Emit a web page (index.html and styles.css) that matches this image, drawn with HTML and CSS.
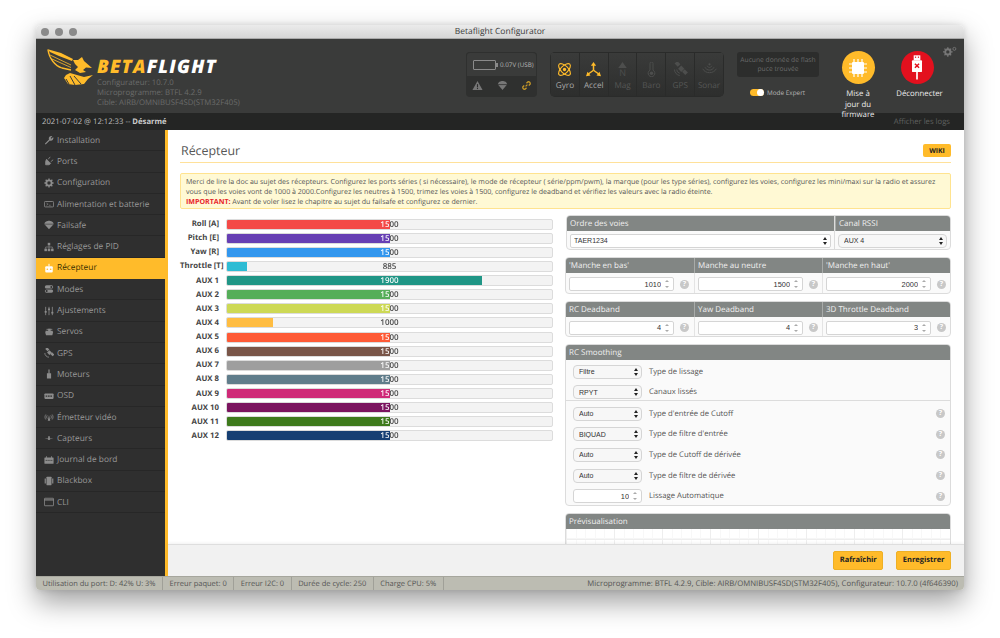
FILE: index.html
```html
<!DOCTYPE html>
<html lang="fr">
<head>
<meta charset="utf-8">
<title>Betaflight Configurator</title>
<link rel="stylesheet" href="styles.css">
</head>
<body>
<div class="window">
  <div class="titlebar">
    <div class="dots"><i></i><i></i><i></i></div>
    <span>Betaflight Configurator</span>
  </div>
  <header class="header">
    <div class="brand">
      <svg class="wasp" viewBox="0 0 46 37" width="46" height="37">
        <path d="M0 1 L14 5 L26 11 L25 13 L12 8 L3 4 Z" fill="#ffbb2a"/>
        <path d="M1 2 C2 10 8 18 15 20 L24 22" fill="none" stroke="#ffbb2a" stroke-width="1.300"/>
        <path d="M3 7 L24 17 M5 11 L24 19.500" stroke="#ffbb2a" stroke-width=".8" fill="none"/>
        <path d="M26 12 L31 12 L35 9 L37 13 L45 20 L39 19.500 L36 22 L39 24 L33 25 L28 22 L31 19 L28 16 Z" fill="#ffbb2a"/>
        <path d="M23 25 L30 27 L37 29 L46 27 L41 31 L37 36 L28 37 L21 36 L17 30 L19 27 Z" fill="#ffbb2a"/>
        <path d="M23 28 L28 37 M27 28 L34 36 M19 31 L22 36" stroke="#3a3b3a" stroke-width="1" fill="none"/>
      </svg>
      <div class="brand-text">
        <div class="logotype"><span class="beta">BETA</span>FLIGHT</div>
        <div class="version">Configurateur: 10.7.0</div>
        <div class="version">Microprogramme: BTFL 4.2.9</div>
        <div class="version">Cible: AIRB/OMNIBUSF4SD(STM32F405)</div>
      </div>
    </div>
    <div class="power">
      <div class="battery-row">
        <span class="battery"></span>
        <span>0.07V (USB)</span>
      </div>
      <div class="status-icons">
        <svg viewBox="0 0 12 12" width="11" height="11"><path d="M6 1 L11.500 11 H.5 Z" fill="#777"/><rect x="5.400" y="4.500" width="1.200" height="3.500" fill="#2c2c2c"/><rect x="5.400" y="8.700" width="1.200" height="1.200" fill="#2c2c2c"/></svg>
        <svg viewBox="0 0 12 12" width="11" height="11"><path d="M1 5 C1 2 4 1 6 1 C8 1 11 2 11 5 L6 11 Z" fill="#777"/><path d="M1 5 H11" stroke="#2c2c2c" stroke-width=".8"/></svg>
        <svg viewBox="0 0 12 12" width="11" height="11"><path d="M5 7 L7 5 M3.500 6 L2 7.500 A2 2 0 0 0 4.500 10 L6 8.500 M6 3.500 L7.500 2 A2 2 0 0 1 10 4.500 L8.500 6" fill="none" stroke="#c99a28" stroke-width="1.400"/></svg>
      </div>
    </div>
    <div class="sensors">
      <div class="sensor on">
        <svg viewBox="0 0 20 20"><g fill="none" stroke="#ffbb2a" stroke-width="1.500"><ellipse cx="10" cy="10" rx="10" ry="4.800" transform="rotate(45 10 10)"/><ellipse cx="10" cy="10" rx="10" ry="4.800" transform="rotate(-45 10 10)"/></g><circle cx="10" cy="10" r="2.200" fill="#ffbb2a"/></svg>
        <span>Gyro</span>
      </div>
      <div class="sensor on">
        <svg viewBox="0 0 20 20"><g stroke="#ffbb2a" stroke-width="2" fill="none"><path d="M10 11 V3"/><path d="M10 11 L3 16"/><path d="M10 11 L17 16"/></g><g fill="#ffbb2a"><path d="M10 0 L13.500 5 H6.500 Z"/><path d="M0 19 L2 13 L6 18 Z"/><path d="M20 19 L18 13 L14 18 Z"/></g></svg>
        <span>Accel</span>
      </div>
      <div class="sensor">
        <div class="mag"><svg viewBox="0 0 10 7" width="9" height="6"><path d="M5 0 L10 7 H0 Z" fill="#4d4e4d"/></svg><b>N</b></div>
        <span>Mag</span>
      </div>
      <div class="sensor">
        <svg viewBox="0 0 20 20"><path d="M8 2 a2 2 0 0 1 4 0 V11 a4.500 4.500 0 1 1 -4 0 Z" fill="none" stroke="#4d4e4d" stroke-width="1.300"/><circle cx="10" cy="15" r="2.300" fill="#4d4e4d"/></svg>
        <span>Baro</span>
      </div>
      <div class="sensor">
        <svg viewBox="0 0 20 20"><g fill="#4d4e4d"><rect x="8" y="6" width="6" height="6" transform="rotate(45 11 9)"/><rect x="3" y="0" width="6" height="5" transform="rotate(45 6 2.500)"/><rect x="13" y="11" width="6" height="5" transform="rotate(45 16 13.500)"/></g><path d="M2 10 a8 8 0 0 0 7 8 M5 10 a5 5 0 0 0 4 5" fill="none" stroke="#4d4e4d" stroke-width="1.300"/></svg>
        <span>GPS</span>
      </div>
      <div class="sensor">
        <svg viewBox="0 0 20 20"><g fill="none" stroke="#4d4e4d" stroke-width="1.300"><path d="M1 9 C4 16 16 16 19 9"/><path d="M4 7 C6 12 14 12 16 7"/><path d="M7 5 C8 8 12 8 13 5"/></g><circle cx="10" cy="3" r="1.500" fill="#4d4e4d"/></svg>
        <span>Sonar</span>
      </div>
    </div>
    <div class="side-info">
      <div class="flash">Aucune donnée de flash<br>puce trouvée</div>
      <div class="expert"><span class="toggle"></span><span>Mode Expert</span></div>
    </div>
    <div class="action action-update">
      <div class="round update">
        <svg viewBox="0 0 24 24" width="24" height="24"><path d="M8 3 V21 M12 3 V21 M16 3 V21 M3 8 H21 M3 12 H21 M3 16 H21" stroke="#fff" stroke-width="1.200"/><rect x="6" y="6" width="12" height="12" rx="1" fill="#fff"/></svg>
      </div>
      <span>Mise à<br>jour du<br>firmware</span>
    </div>
    <div class="action action-disconnect">
      <div class="round disconnect">
        <svg viewBox="0 0 24 30" width="20" height="26"><rect x="8" y="1" width="8" height="6" fill="#fff"/><rect x="9.500" y="2.500" width="1.500" height="1.500" fill="#e3101e"/><rect x="13" y="2.500" width="1.500" height="1.500" fill="#e3101e"/><rect x="6" y="7" width="12" height="14" rx="1" fill="#fff"/><path d="M12 21 V30" stroke="#fff" stroke-width="2"/><path d="M9.500 11 L14.500 16 M14.500 11 L9.500 16" stroke="#e3101e" stroke-width="1.800"/></svg>
      </div>
      <span>Déconnecter</span>
    </div>
    <svg class="gear" viewBox="0 0 16 12" width="14" height="11">
      <circle cx="5.500" cy="6.500" r="3" fill="none" stroke="#777" stroke-width="2.200"/>
      <path d="M5.500 1 V3 M5.500 10 V12 M0 6.500 H2 M9 6.500 H11 M1.700 2.700 L3 4 M8 9 L9.300 10.300 M1.700 10.300 L3 9 M8 4 L9.300 2.700" stroke="#777" stroke-width="1.500"/>
      <circle cx="13" cy="3" r="1.700" fill="none" stroke="#777" stroke-width="1"/>
    </svg>
  </header>
  <div class="logbar">
    <span>2021-07-02 @ 12:12:33 -- <b>Désarmé</b></span>
    <span class="showlogs">Afficher les logs</span>
  </div>
  <div class="main">
    <nav class="nav">
      <svg width="0" height="0" class="defs">
        <defs>
          <symbol id="i-wrench" viewBox="0 0 12 12"><path d="M1 10.500 L6 5.500 A3 3 0 0 1 10 1.500 L8 3.500 L9 4.500 L11 2.500 A3 3 0 0 1 7 6.500 L2 11.500 Z" fill="currentColor"/></symbol>
          <symbol id="i-plug" viewBox="0 0 12 12"><path d="M3 4 L8 9 L6 10.500 L2 10.500 L2 6.500 Z M5 4 L7.500 1 M8 7 L11 4.500" fill="currentColor" stroke="currentColor"/></symbol>
          <symbol id="i-gear" viewBox="0 0 12 12"><circle cx="6" cy="6" r="3.200" fill="none" stroke="currentColor" stroke-width="2.200"/><path d="M6 .5 V2.500 M6 9.500 V11.500 M.5 6 H2.500 M9.500 6 H11.500 M2 2 L3.500 3.500 M8.500 8.500 L10 10 M2 10 L3.500 8.500 M8.500 3.500 L10 2" stroke="currentColor" stroke-width="1.600"/></symbol>
          <symbol id="i-batt" viewBox="0 0 12 12"><rect x=".5" y="3" width="11" height="6.500" rx="1" fill="none" stroke="currentColor"/><path d="M3 5 L5 6.200 L3 7.500 M6 7.500 H8" fill="none" stroke="currentColor" stroke-width=".7"/></symbol>
          <symbol id="i-chute" viewBox="0 0 12 12"><path d="M.5 5 C.5 2 4 1 6 1 C8 1 11.500 2 11.500 5 L6 11 Z" fill="currentColor"/><path d="M.5 5 H11.500" stroke="#2f2f2f" stroke-width=".7"/></symbol>
          <symbol id="i-tree" viewBox="0 0 12 12"><g fill="currentColor"><rect x="4.500" y="1" width="3" height="3"/><rect x="0.500" y="8" width="3" height="3"/><rect x="4.500" y="8" width="3" height="3"/><rect x="8.500" y="8" width="3" height="3"/></g><path d="M6 4 V8 M2 8 V6 H10 V8" fill="none" stroke="currentColor" stroke-width=".8"/></symbol>
          <symbol id="i-radio" viewBox="0 0 12 12"><rect x="1.500" y="4" width="9" height="7.500" rx="1.200" fill="currentColor"/><path d="M6 4 V1" stroke="currentColor" stroke-width="1.200"/><circle cx="4" cy="7.500" r="1" fill="var(--hole)"/><circle cx="8" cy="7.500" r="1" fill="var(--hole)"/></symbol>
          <symbol id="i-modes" viewBox="0 0 12 12"><rect x="1" y="1.500" width="10" height="4" rx="2" fill="currentColor"/><rect x="1" y="6.500" width="10" height="4" rx="2" fill="currentColor"/><circle cx="8.800" cy="3.500" r="1.200" fill="#2f2f2f"/><circle cx="3.200" cy="8.500" r="1.200" fill="#2f2f2f"/></symbol>
          <symbol id="i-sliders" viewBox="0 0 12 12"><path d="M2 1 V11 M6 1 V11 M10 1 V11" stroke="currentColor"/><rect x=".8" y="6" width="2.400" height="2" fill="currentColor"/><rect x="4.800" y="3" width="2.400" height="2" fill="currentColor"/><rect x="8.800" y="7" width="2.400" height="2" fill="currentColor"/></symbol>
          <symbol id="i-servo" viewBox="0 0 12 12"><path d="M2 4.500 H10 L11 6 L10 10 H2.500 L1.500 7 Z M5 2 H8 V4.500 H5 Z" fill="currentColor"/><path d="M3 2.800 H10" stroke="currentColor"/></symbol>
          <symbol id="i-sat" viewBox="0 0 12 12"><g fill="currentColor"><rect x="4.500" y="3.500" width="4" height="4" transform="rotate(45 6.500 5.500)"/><rect x="2" y="0" width="4" height="3" transform="rotate(45 4 1.500)"/><rect x="8" y="6" width="4" height="3" transform="rotate(45 10 7.500)"/></g><path d="M1 6 a5 5 0 0 0 5 5" fill="none" stroke="currentColor"/></symbol>
          <symbol id="i-motor" viewBox="0 0 12 12"><path d="M3.500 5 H8.500 V11.500 H3.500 Z M5.300 .5 H6.700 V5 H5.300 Z" fill="currentColor"/></symbol>
          <symbol id="i-osd" viewBox="0 0 12 12"><rect x=".5" y="3" width="11" height="6.500" rx="1" fill="currentColor"/><path d="M2 6.200 H10" stroke="#2f2f2f" stroke-width="1.400" stroke-dasharray="2 .8"/></symbol>
          <symbol id="i-vtx" viewBox="0 0 12 12"><g fill="none" stroke="currentColor" stroke-width=".9"><path d="M2.200 3 C.8 5 .8 7 2.200 9"/><path d="M3.800 4 C3 5.300 3 6.700 3.800 8"/><path d="M9.800 3 C11.200 5 11.200 7 9.800 9"/><path d="M8.200 4 C9 5.300 9 6.700 8.200 8"/></g><path d="M6 3.500 L7.500 10.500 H4.500 Z" fill="currentColor"/></symbol>
          <symbol id="i-sensor" viewBox="0 0 12 12"><path d="M.5 6.500 H11.500 L7 7.500 H5 Z M5 4 L7 4 L7 8.500 H5 Z" fill="currentColor"/></symbol>
          <symbol id="i-log" viewBox="0 0 12 12"><rect x=".5" y="3" width="11" height="7.500" rx=".6" fill="currentColor"/><path d="M3 1.500 V3.500 M9 1.500 V3.500" stroke="currentColor"/><path d="M2 6.500 H10" stroke="#2f2f2f" stroke-width=".9" stroke-dasharray="1.500 .7"/></symbol>
          <symbol id="i-box" viewBox="0 0 12 12"><rect x="3" y="1" width="6" height="10" rx=".5" fill="currentColor"/><rect x=".8" y="3" width="1.400" height="6" fill="currentColor"/><rect x="9.800" y="3" width="1.400" height="6" fill="currentColor"/></symbol>
          <symbol id="i-cli" viewBox="0 0 12 12"><rect x=".5" y="1.500" width="11" height="9" rx=".6" fill="none" stroke="currentColor"/><path d="M.5 3.500 H11.500" stroke="currentColor" stroke-width="1.400"/></symbol>
        </defs>
      </svg>
      <a><svg><use href="#i-wrench"/></svg>Installation</a>
      <a><svg><use href="#i-plug"/></svg>Ports</a>
      <a><svg><use href="#i-gear"/></svg>Configuration</a>
      <a><svg><use href="#i-batt"/></svg>Alimentation et batterie</a>
      <a><svg><use href="#i-chute"/></svg>Failsafe</a>
      <a><svg><use href="#i-tree"/></svg>Réglages de PID</a>
      <a class="active"><svg><use href="#i-radio"/></svg>Récepteur</a>
      <a><svg><use href="#i-modes"/></svg>Modes</a>
      <a><svg><use href="#i-sliders"/></svg>Ajustements</a>
      <a><svg><use href="#i-servo"/></svg>Servos</a>
      <a><svg><use href="#i-sat"/></svg>GPS</a>
      <a><svg><use href="#i-motor"/></svg>Moteurs</a>
      <a><svg><use href="#i-osd"/></svg>OSD</a>
      <a><svg><use href="#i-vtx"/></svg>Émetteur vidéo</a>
      <a><svg><use href="#i-sensor"/></svg>Capteurs</a>
      <a><svg><use href="#i-log"/></svg>Journal de bord</a>
      <a><svg><use href="#i-box"/></svg>Blackbox</a>
      <a><svg><use href="#i-cli"/></svg>CLI</a>
    </nav>
    <div class="content">
      <div class="scroll">
        <div class="title-row">
          <h1>Récepteur</h1>
          <a class="wiki">WIKI</a>
        </div>
        <div class="note">
          Merci de lire la doc au sujet des récepteurs. Configurez les ports séries ( si nécessaire), le mode de récepteur ( série/ppm/pwm), la marque (pour les type séries), configurez les voies, configurez les mini/maxi sur la radio et assurez vous que les voies vont de 1000 à 2000.Configurez les neutres à 1500, trimez les voies à 1500, configurez le deadband et vérifiez les valeurs avec la radio éteinte.<br>
          <b>IMPORTANT:</b> Avant de voler lisez le chapitre au sujet du failsafe et configurez ce dernier.
        </div>
        <div class="columns">
          <div class="bars">
            <div class="bar-row"><label>Roll [A]</label><div class="bar" style="--p:50%;--c:#f44a47"><div class="fill"></div><div class="val">1500</div></div></div>
            <div class="bar-row"><label>Pitch [E]</label><div class="bar" style="--p:50%;--c:#673fb4"><div class="fill"></div><div class="val">1500</div></div></div>
            <div class="bar-row"><label>Yaw [R]</label><div class="bar" style="--p:50%;--c:#3397ee"><div class="fill"></div><div class="val">1500</div></div></div>
            <div class="bar-row"><label class="long">Throttle [T]</label><div class="bar" style="--p:6.200%;--c:#2dbcd4"><div class="fill"></div><div class="val">885</div></div></div>
            <div class="bar-row"><label>AUX 1</label><div class="bar" style="--p:78.600%;--c:#209686"><div class="fill"></div><div class="val">1900</div></div></div>
            <div class="bar-row"><label>AUX 2</label><div class="bar" style="--p:50%;--c:#55ae59"><div class="fill"></div><div class="val">1500</div></div></div>
            <div class="bar-row"><label>AUX 3</label><div class="bar" style="--p:50%;--c:#cdd955"><div class="fill"></div><div class="val">1500</div></div></div>
            <div class="bar-row"><label>AUX 4</label><div class="bar" style="--p:14.100%;--c:#ffbd42"><div class="fill"></div><div class="val">1000</div></div></div>
            <div class="bar-row"><label>AUX 5</label><div class="bar" style="--p:50%;--c:#fe5a36"><div class="fill"></div><div class="val">1500</div></div></div>
            <div class="bar-row"><label>AUX 6</label><div class="bar" style="--p:50%;--c:#795548"><div class="fill"></div><div class="val">1500</div></div></div>
            <div class="bar-row"><label>AUX 7</label><div class="bar" style="--p:50%;--c:#9e9e9e"><div class="fill"></div><div class="val">1500</div></div></div>
            <div class="bar-row"><label>AUX 8</label><div class="bar" style="--p:50%;--c:#607d8b"><div class="fill"></div><div class="val">1500</div></div></div>
            <div class="bar-row"><label>AUX 9</label><div class="bar" style="--p:50%;--c:#cf2a78"><div class="fill"></div><div class="val">1500</div></div></div>
            <div class="bar-row"><label>AUX 10</label><div class="bar" style="--p:50%;--c:#7b145f"><div class="fill"></div><div class="val">1500</div></div></div>
            <div class="bar-row"><label>AUX 11</label><div class="bar" style="--p:50%;--c:#3e7a1c"><div class="fill"></div><div class="val">1500</div></div></div>
            <div class="bar-row"><label>AUX 12</label><div class="bar" style="--p:50%;--c:#173f73"><div class="fill"></div><div class="val">1500</div></div></div>
          </div>
          <div class="panels">
            <div class="panel channel-panel">
              <div class="cell cell-wide">
                <div class="cell-head">Ordre des voies</div>
                <div class="cell-body"><div class="select-wrap"><select><option>TAER1234</option></select></div></div>
              </div>
              <div class="cell cell-rssi">
                <div class="cell-head">Canal RSSI</div>
                <div class="cell-body"><div class="select-wrap rounded"><select><option>AUX 4</option></select></div></div>
              </div>
            </div>
            <div class="panel">
              <div class="cell"><div class="cell-head">'Manche en bas'</div><div class="cell-body num"><div class="num-wrap"><input value="1010"><i class="spin"></i></div><span class="help">?</span></div></div>
              <div class="cell"><div class="cell-head">Manche au neutre</div><div class="cell-body num"><div class="num-wrap"><input value="1500"><i class="spin"></i></div><span class="help">?</span></div></div>
              <div class="cell"><div class="cell-head">'Manche en haut'</div><div class="cell-body num"><div class="num-wrap"><input value="2000"><i class="spin"></i></div><span class="help">?</span></div></div>
            </div>
            <div class="panel">
              <div class="cell"><div class="cell-head">RC Deadband</div><div class="cell-body num"><div class="num-wrap"><input value="4"><i class="spin"></i></div><span class="help">?</span></div></div>
              <div class="cell"><div class="cell-head">Yaw Deadband</div><div class="cell-body num"><div class="num-wrap"><input value="4"><i class="spin"></i></div><span class="help">?</span></div></div>
              <div class="cell"><div class="cell-head">3D Throttle Deadband</div><div class="cell-body num"><div class="num-wrap"><input value="3"><i class="spin"></i></div><span class="help">?</span></div></div>
            </div>
            <div class="panel stack">
              <div class="cell-head">RC Smoothing</div>
              <div class="smooth top">
                <div class="smooth-row"><div class="select-wrap rounded"><select><option>Filtre</option></select></div><span>Type de lissage</span></div>
                <div class="smooth-row"><div class="select-wrap rounded"><select><option>RPYT</option></select></div><span>Canaux lissés</span></div>
              </div>
              <div class="smooth rest">
                <div class="smooth-row"><div class="select-wrap rounded"><select><option>Auto</option></select></div><span>Type d'entrée de Cutoff</span><span class="help">?</span></div>
                <div class="smooth-row"><div class="select-wrap rounded"><select><option>BIQUAD</option></select></div><span>Type de filtre d'entrée</span><span class="help">?</span></div>
                <div class="smooth-row"><div class="select-wrap rounded"><select><option>Auto</option></select></div><span>Type de Cutoff de dérivée</span><span class="help">?</span></div>
                <div class="smooth-row"><div class="select-wrap rounded"><select><option>Auto</option></select></div><span>Type de filtre de dérivée</span><span class="help">?</span></div>
                <div class="smooth-row"><div class="num-wrap"><input value="10"><i class="spin"></i></div><span>Lissage Automatique</span><span class="help">?</span></div>
              </div>
            </div>
            <div class="panel stack">
              <div class="cell-head">Prévisualisation</div>
              <div class="preview"></div>
            </div>
          </div>
        </div>
      </div>
      <div class="footer">
        <a class="btn">Rafraîchir</a>
        <a class="btn">Enregistrer</a>
      </div>
    </div>
  </div>
  <footer class="statusbar">
    <span>Utilisation du port: D: 42% U: 3%</span>
    <span>Erreur paquet: 0</span>
    <span>Erreur I2C: 0</span>
    <span>Durée de cycle: 250</span>
    <span>Charge CPU: 5%</span>
    <span class="fw">Microprogramme: BTFL 4.2.9, Cible: AIRB/OMNIBUSF4SD(STM32F405), Configurateur: 10.7.0 (4f646390)</span>
  </footer>
</div>
</body>
</html>
```
FILE: styles.css
```css
* { box-sizing: border-box; }
html, body { height: 100%; }
body {
  margin: 0;
  padding: 25px 36px 0;
  background: #fff;
  font-family: "Open Sans", "Liberation Sans", sans-serif;
  font-size: 8.5px;
  color: #444;
  overflow: hidden;
  text-rendering: geometricPrecision;
}
.window {
  height: 565px;
  display: flex;
  flex-direction: column;
  border-radius: 5px 5px 4px 4px;
  box-shadow: 0 12px 28px rgba(0,0,0,.38), 0 0 6px rgba(0,0,0,.12);
  overflow: hidden;
}
.titlebar {
  height: 14px;
  flex: none;
  display: flex;
  align-items: center;
  justify-content: center;
  position: relative;
  background: linear-gradient(#ebebeb, #d6d6d6);
  border-bottom: 1px solid #aaa;
  font-size: 8.5px;
  color: #3c3c3c;
}
.dots { position: absolute; left: 5px; top: 3px; display: flex; gap: 6px; }
.dots i { width: 8px; height: 8px; border-radius: 50%; background: #8a8a8a; }

.header {
  height: 74px;
  flex: none;
  position: relative;
  z-index: 1;
  display: flex;
  background: #3a3b3a;
  color: #ddd;
}
.brand { display: flex; width: 430px; padding: 9px 0 0 11px; }
.wasp { flex: none; }
.brand-text { margin: 12px 0 0 4px; }
.logotype {
  font: italic 800 18.500px/14px "Open Sans", sans-serif;
  color: #fff;
  margin-bottom: 4px;
  letter-spacing: 1.200px;
}
.beta { color: #ffbb2a; }
.version { font-size: 7.800px; line-height: 10.200px; color: #6a6b6a; white-space: nowrap; }

.power {
  width: 71px;
  height: 45px;
  margin-top: 13px;
  border-radius: 4px;
  background: #2f302f;
  overflow: hidden;
  font-size: 6.300px;
  color: #b5b5b5;
}
.battery-row {
  height: 24px;
  display: flex;
  align-items: center;
  gap: 4px;
  padding-left: 6px;
  background: #3a3b3a;
  border: 1px solid #2f302f;
  border-bottom: none;
  border-radius: 4px 4px 0 0;
  white-space: nowrap;
}
.battery {
  width: 23px;
  height: 10px;
  border: 1px solid #8a8a8a;
  border-radius: 1px;
  flex: none;
  position: relative;
}
.battery::after {
  content: "";
  position: absolute;
  right: -3px;
  top: 2px;
  width: 2px;
  height: 4px;
  background: #8a8a8a;
}
.status-icons { display: flex; justify-content: space-between; align-items: center; height: 19px; padding: 0 5px 0 6px; }

.sensors {
  width: 174px;
  height: 45px;
  margin: 13px 0 0 13px;
  display: flex;
  gap: 1px;
  background: #2a2b2a;
  border-radius: 5px;
  overflow: hidden;
  padding: 1px;
}
.sensor {
  flex: 1;
  display: flex;
  flex-direction: column;
  align-items: center;
  padding-top: 9px;
  background: linear-gradient(#3a3b3a, #2d2e2d);
  font-size: 8.200px;
  color: #565756;
}
.sensor svg { flex: none; width: 15px; height: 15px; }
.sensor span { margin-top: 3px; }
.sensor.on span { color: #a8a8a8; }
.mag { height: 15px; display: flex; flex-direction: column; align-items: center; }
.sensor .mag svg { display: block; width: 9px; height: 6px; }
.mag b { font-weight: 400; font-size: 9px; line-height: 9px; color: #4d4e4d; }

.side-info { width: 82px; margin: 13px 0 0 13px; }
.flash {
  height: 25px;
  background: #2c2d2c;
  border-radius: 3px;
  padding-top: 4px;
  text-align: center;
  color: #6b6c6b;
  font-size: 6.700px;
  line-height: 8.500px;
  white-space: nowrap;
}
.expert {
  display: flex;
  align-items: center;
  gap: 3px;
  margin: 11px 0 0 13px;
  font-size: 6.400px;
  color: #b8b8b8;
  white-space: nowrap;
}
.toggle {
  width: 14px;
  height: 7px;
  background: #ffbb2a;
  border-radius: 4px;
  position: relative;
  flex: none;
}
.toggle::after {
  content: "";
  position: absolute;
  right: 0;
  top: 0;
  width: 7px;
  height: 7px;
  border-radius: 50%;
  background: #fff;
}

.action {
  display: flex;
  flex-direction: column;
  align-items: center;
  margin-top: 12px;
  font-size: 7.800px;
  line-height: 10.500px;
  color: #eee;
  text-align: center;
  white-space: nowrap;
}
.action-update { width: 50px; margin-left: 14px; }
.action-disconnect { width: 50px; margin-left: 9px; }
.action span { margin-top: 5px; }
.action-disconnect span { margin-left: 5px; }
.round {
  width: 33px;
  height: 33px;
  border-radius: 50%;
  flex: none;
  display: flex;
  align-items: center;
  justify-content: center;
}
.update { background: #ffbb2a; }
.disconnect { background: #e3101e; overflow: hidden; align-items: flex-start; padding-top: 3px; }
.gear { position: absolute; right: 7px; top: 7px; }

.logbar {
  height: 17px;
  flex: none;
  display: flex;
  justify-content: space-between;
  align-items: center;
  padding: 0 14px 0 6px;
  background: #242524;
  color: #bdbdbd;
  font-size: 7.700px;
}
.logbar b { font-weight: 700; color: #ccc; }
.showlogs { color: #5f605f; }

.main { flex: 1; display: flex; min-height: 0; }
.nav {
  width: 132px;
  flex: none;
  background: #2f2f2f;
  border-right: 3px solid #ffbb2a;
}
.defs { position: absolute; }
.nav a {
  height: 21.300px;
  display: flex;
  align-items: center;
  gap: 3px;
  padding-left: 8px;
  color: #989898;
  font-size: 8.350px;
  border-bottom: 1px solid #272727;
  white-space: nowrap;
  --hole: #ffbb2a;
}
.nav svg:not(.defs) { width: 10px; height: 10px; flex: none; color: #8c8c8c; }
.nav a.active { background: #ffbb2a; color: #3a3000; border-bottom-color: #ffbb2a; }
.nav a.active svg { color: #fff; }

.content {
  flex: 1;
  min-width: 0;
  display: flex;
  flex-direction: column;
  background: #fff;
}
.scroll { flex: 1; min-height: 0; overflow: hidden; padding: 13px 13px 0 12px; }
.title-row {
  height: 20px;
  display: flex;
  justify-content: space-between;
  border-bottom: 1px solid #ffe19a;
}
h1 {
  margin: 0 0 0 1px;
  font-size: 12.400px;
  line-height: 15px;
  font-weight: 400;
  color: #555;
}
.wiki {
  width: 28px;
  height: 13px;
  margin-top: 1px;
  background: #ffbb2a;
  border-radius: 2px;
  text-align: center;
  font-size: 6.800px;
  font-weight: 700;
  line-height: 13px;
  color: #222;
}
.note {
  height: 36px;
  margin-top: 10px;
  padding: 3px 5px 0;
  background: #fff9d4;
  border: 1px solid #ffe38f;
  border-radius: 2px;
  font-size: 7.070px;
  line-height: 10px;
  color: #555;
}
.note b { color: #e8222a; }

.columns { display: flex; margin-top: 6px; }
.bars { width: 373px; flex: none; padding-top: 2px; }
.bar-row { height: 14.130px; display: flex; align-items: center; }
.bar-row label {
  width: 39px;
  margin-right: 7px;
  flex: none;
  text-align: right;
  font-weight: 700;
  font-size: 7.800px;
  color: #444;
  white-space: nowrap;
  display: flex;
  justify-content: flex-end;
}
.bar-row label.long { justify-content: flex-start; }
.bar {
  width: 327px;
  height: 11px;
  position: relative;
  background: #f3f3f3;
  border: 1px solid #dcdcdc;
  border-radius: 2px;
}
.fill {
  position: absolute;
  left: 0;
  top: 0;
  bottom: 0;
  width: var(--p);
  background: var(--c);
  border-radius: 1px 0 0 1px;
}
.val {
  position: relative;
  text-align: center;
  font-size: 8px;
  line-height: 9px;
  font-weight: 600;
  color: transparent;
  background: linear-gradient(90deg, #fff var(--p), #444 var(--p));
  -webkit-background-clip: text;
  background-clip: text;
}

.panels { width: 386px; margin-left: 12px; flex: none; display: flex; flex-direction: column; gap: 7px; }
.panel {
  display: flex;
  flex: none;
  border: 1px solid #dcdcdc;
  border-radius: 4px;
  background: #fafafa;
  overflow: hidden;
}
.stack { flex-direction: column; }
.channel-panel { margin-left: 1px; }
.cell { flex: 1; min-width: 0; }
.cell-wide { flex: none; width: 268px; border-right: 1px solid #dcdcdc; }
.cell-rssi { flex: 1; }
.cell-head {
  height: 15px;
  padding-left: 3px;
  background: #828684;
  color: #f0f0f0;
  font-size: 8px;
  line-height: 16.500px;
  white-space: nowrap;
  border-left: 1px solid #a8aba9;
}
.cell:first-child .cell-head, .stack .cell-head { border-left: none; }
.cell-body { height: 18px; padding: 2.500px 3px; }
.cell-body.num {
  display: flex;
  align-items: center;
  gap: 6px;
  height: 19.500px;
  padding: 3px 0 0 3px;
  border-left: 1px solid #e4e4e4;
}
.cell:first-child .cell-body.num { border-left: none; }
select, input {
  font: inherit;
  width: 100%;
  height: 100%;
  border: none;
  outline: none;
  background: transparent;
  color: #333;
  appearance: none;
  padding: 0;
}
.select-wrap {
  position: relative;
  height: 14px;
  background: #fff;
  border: 1px solid #d5d5d5;
  border-radius: 2px;
  font-family: "Liberation Sans", Arial, sans-serif;
  font-size: 7px;
}
.select-wrap select { padding-left: 3px; }
.select-wrap.rounded { background: #f7f7f7; border-radius: 4px; }
.select-wrap.rounded select { padding-left: 5px; }
.select-wrap::before, .select-wrap::after {
  content: "";
  position: absolute;
  right: 3px;
  width: 0;
  height: 0;
  border-left: 2px solid transparent;
  border-right: 2px solid transparent;
  pointer-events: none;
}
.select-wrap::before { top: 2px; border-bottom: 3px solid #222; }
.select-wrap::after { bottom: 2px; border-top: 3px solid #222; }
.num-wrap {
  flex: 1;
  height: 14px;
  display: flex;
  align-items: center;
  background: #fff;
  border: 1px solid #d5d5d5;
  border-radius: 2px;
  font-family: "Liberation Sans", Arial, sans-serif;
  font-size: 7.400px;
}
.num-wrap input { flex: 1; min-width: 0; text-align: right; padding-right: 3px; }
.spin {
  flex: none;
  width: 7px;
  height: 10px;
  margin-right: 2px;
  position: relative;
}
.spin::before, .spin::after {
  content: "";
  position: absolute;
  left: 1px;
  border-left: 2px solid transparent;
  border-right: 2px solid transparent;
}
.spin::before { top: 1px; border-bottom: 2px solid #aaa; }
.spin::after { bottom: 1px; border-top: 2px solid #aaa; }
.help {
  flex: none;
  width: 9px;
  height: 9px;
  border-radius: 50%;
  background: #c8c8c8;
  color: #fff;
  font-size: 7px;
  font-weight: 700;
  line-height: 9px;
  text-align: center;
}
.cell-body.num .num-wrap { flex: none; width: 105px; }
.smooth { padding: 0 5px 0 7px; }
.smooth.top { border-bottom: 1px solid #dcdcdc; height: 41px; padding-top: 1.500px; }
.smooth.rest { height: 104px; padding-top: 2.500px; }
.smooth-row { height: 20.600px; display: flex; align-items: center; font-size: 7.700px; color: #555; }
.smooth-row .select-wrap, .smooth-row .num-wrap { flex: none; width: 69px; margin-right: 7px; }
.smooth-row .num-wrap { border-radius: 3px; }
.smooth-row .help { margin: 0 0 0 auto; }
.preview {
  height: 60px;
  background-color: #fff;
  background-image:
    linear-gradient(#eee, #eee),
    repeating-linear-gradient(90deg, #eee 0 1px, transparent 1px 48px),
    repeating-linear-gradient(90deg, #f8f8f8 0 1px, transparent 1px 9.600px),
    repeating-linear-gradient(0deg, #f6f6f6 0 1px, transparent 1px 10px);
  background-size: 100% 1px, auto, auto, auto;
  background-position: 0 10px, 0 0, 0 0, 0 0;
  background-repeat: no-repeat, repeat, repeat, repeat;
}

.footer {
  height: 32px;
  flex: none;
  display: flex;
  justify-content: flex-end;
  align-items: center;
  gap: 13px;
  padding: 0 13px 0 0;
  background: #f1f1f1;
  border-top: 1px solid #dedede;
  box-shadow: 0 -1px 3px rgba(0,0,0,.06);
  position: relative;
}
.btn {
  height: 19px;
  padding: 0 5.500px;
  background: #ffbb2a;
  border: 1px solid #eeb025;
  border-radius: 2px;
  font-size: 7.500px;
  font-weight: 700;
  line-height: 17px;
  color: #222;
}
.statusbar {
  height: 14px;
  flex: none;
  display: flex;
  align-items: stretch;
  background: #bcbcb2;
  border-top: 1px solid #a8a89f;
  color: #555;
  font-size: 7.500px;
  line-height: 14px;
  white-space: nowrap;
}
.statusbar span { padding: 0 6.500px; border-right: 1px solid #a0a098; }
.statusbar .fw { margin-left: auto; border-right: none; font-size: 7.750px; padding-right: 6px; }
```
